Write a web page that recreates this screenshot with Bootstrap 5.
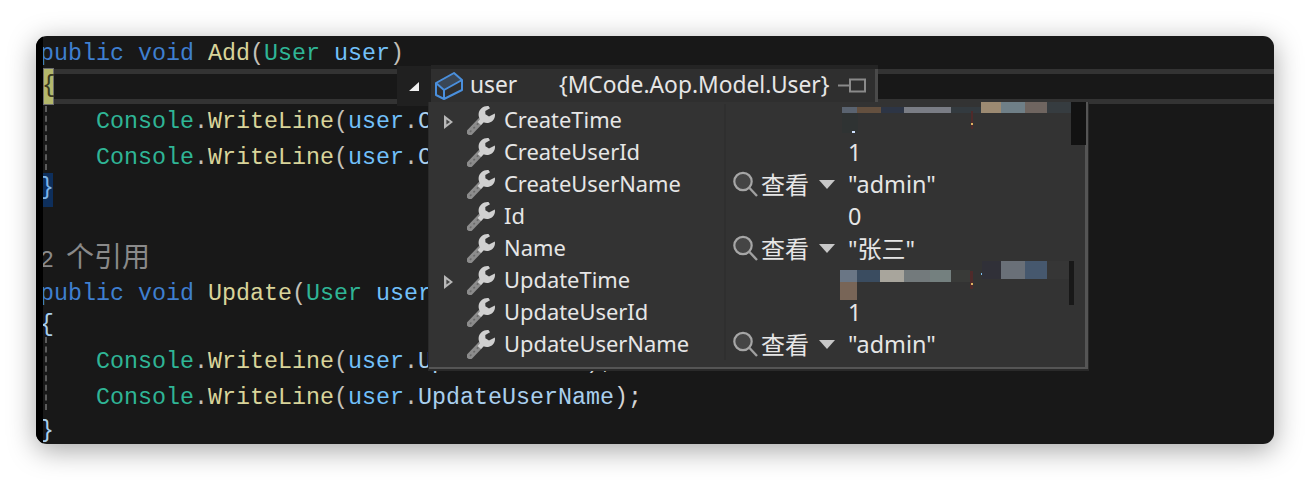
<!DOCTYPE html>
<html lang="zh"><head><meta charset="utf-8"><title>Debug tooltip</title>
<link href="https://cdn.jsdelivr.net/npm/bootstrap@5.3.0/dist/css/bootstrap.min.css" rel="stylesheet">
<style>
html,body{height:100%;background:#fff;overflow:hidden}
.stage{padding:36px 36px 0}
.win{height:408px;border-radius:11px;background:#181818;box-shadow:0 6px 28px rgba(0,0,0,.36);overflow:hidden}
.strip{width:7px;background:#000;flex:none}
.code{overflow:hidden;font:23.33px/1 "Liberation Mono",monospace;color:#d4d4d4}
.cl{margin-left:-3px;display:flex;align-items:flex-end}
.t{display:block;white-space:pre}
.h28{height:28px}.h31{height:31px}.h33{height:33px}.h36{height:36px}.h37{height:37px}
.first{padding-bottom:3px}
.kw{color:#3f7fd0}.ty{color:#2fb596}.me{color:#d8d49a}.pa{color:#72c0fa}.pu{color:#c4c0b8}.bl{color:#a9cfee}
.lens{color:#8a8a8a}.lens b{font:400 28px/1 "Noto Sans CJK SC",sans-serif;margin-left:-2px}
.band{height:35px;border-top:5px solid #333;border-bottom:5px solid #333}
.yb{width:11px;height:37px;margin:-6px 0;background:#b4b86c;border:1px solid #6e6e6e;color:#3a3a20;line-height:34px;text-align:center;text-indent:-2px;position:relative}
.gd{margin-left:2px;border-left:2px dashed #5c5c5c}
.gd .cl{margin-left:-7px}
.gdA{margin-top:2px;margin-bottom:3px}
.hb{width:10px;height:34px;background:#0e2f5c;color:#7cb4ea;line-height:30px;overflow:hidden}
.hb span{margin-left:-3px}
.tip{left:361px;top:29px;font-family:"Noto Sans","Noto Sans CJK SC",sans-serif;font-size:21.9px;color:#e6e6e6}
.pinbox{width:34px;height:40px;margin-top:1px;margin-bottom:-4px;background:#202020;position:relative}
.head{height:33px;margin-top:4px;width:447px;background:#2f2f2f;border-right:3px solid #4a4a4a;box-shadow:0 -4px 0 #242424;font-size:22.8px}
.uname{width:89px;margin-left:7px}
.uval{width:279px}
.panel{position:relative;margin-left:32px;width:659px;height:267px;background:#333;border-right:3px solid #555;border-bottom:2px solid #555;padding-top:2px;box-shadow:0 1px 0 1px #2a2a2a}
.rw{height:32px}
.exp{width:38px;flex:none;padding-left:14px}
.ico{width:28px;height:30px;flex:none}
.nm{width:229px;flex:none;padding-left:9px;white-space:nowrap;line-height:32px}
.cell{width:2px;flex:none;background:#2f2f2f;align-self:stretch}
.act{width:122px;flex:none;padding-left:6px}
.zh{font:400 24px/32px "Noto Sans CJK SC",sans-serif;width:48px;margin-left:3px}
.val{white-space:nowrap;line-height:32px;font-size:23.4px}
.val i{font:400 24px/32px "Noto Sans CJK SC",sans-serif}
.smear{left:0;top:0;width:659px;height:267px;pointer-events:none}
.dd{margin-left:10px}
</style></head>
<body>
<svg width="0" height="0" class="position-absolute">
<defs>
<symbol id="wr" viewBox="0 0 28 30">
<path d="M3 27 L14 15.5" stroke="#8c8c8c" stroke-width="6.5" stroke-linecap="round" fill="none"/>
<path d="M3 27 L14 15.5" stroke="#6a6a6a" stroke-width="1.6" stroke-dasharray="2 3" fill="none"/>
<path d="M21.5 1 C16.5 .5 12 4 11.6 9 C11.5 11 12 12.8 13 14.2 L10.6 17 L14 20 L16.5 17.2 C18 18 20 18.3 22 17.8 C25.5 17 28 13.8 28 10.3 L27.9 8.5 L22 11.6 L18.4 9.3 L18.3 6 L23 3.2 Z" fill="#d0d0d0"/>
</symbol>
<symbol id="mg" viewBox="0 0 26 26">
<circle cx="11" cy="10.5" r="8.7" fill="#454545" stroke="#a6a6a6" stroke-width="2.2"/>
<path d="M17.5 17 L25 25" stroke="#a0a0a0" stroke-width="2.4"/>
</symbol>
<symbol id="ar" viewBox="0 0 16 9">
<path d="M0 0 H16 L8 9Z" fill="#c8c8c8"/>
</symbol>
<symbol id="ex" viewBox="0 0 10 14">
<path d="M1 0 L10 7 L1 14Z" fill="#b8b8b8"/><path d="M3.4 4.5 L7 7 L3.4 9.5Z" fill="#444"/>
</symbol>
</defs>
</svg>
<div class="stage">
<div class="win d-flex position-relative">
 <div class="strip"></div>
 <div class="code flex-fill">
  <div class="cl h33 first"><span class="t"><span class="kw">public void</span> <span class="me">Add</span><span class="pu">(</span><span class="ty">User</span> <span class="pa">user</span><span class="pu">)</span></span></div>
  <div class="band d-flex"><span class="yb">{</span></div>
  <div class="gd gdA">
   <div class="cl h28"><span class="t">    <span class="ty">Console</span><span class="pu">.</span><span class="me">WriteLine</span><span class="pu">(</span><span class="pa">user</span><span class="pu">.</span><span class="bl">CreateUserId</span>);</span></div>
   <div class="cl h36"><span class="t">    <span class="ty">Console</span><span class="pu">.</span><span class="me">WriteLine</span><span class="pu">(</span><span class="pa">user</span><span class="pu">.</span><span class="bl">CreateUserName</span>);</span></div>
  </div>
  <div class="hb d-flex"><span>}</span></div>
  <div class="h33"></div>
  <div class="cl h33 lens"><span class="t">2 <b>个引用</b></span></div>
  <div class="cl h33"><span class="t"><span class="kw">public void</span> <span class="me">Update</span><span class="pu">(</span><span class="ty">User</span> <span class="pa">user</span><span class="pu">)</span></span></div>
  <div class="cl h31 bl"><span class="t">{</span></div>
  <div class="gd">
   <div class="cl h37"><span class="t">    <span class="ty">Console</span><span class="pu">.</span><span class="me">WriteLine</span><span class="pu">(</span><span class="pa">user</span><span class="pu">.</span><span class="bl">UpdateUserId</span>);</span></div>
   <div class="cl h36"><span class="t">    <span class="ty">Console</span><span class="pu">.</span><span class="me">WriteLine</span><span class="pu">(</span><span class="pa">user</span><span class="pu">.</span><span class="bl">UpdateUserName</span>);</span></div>
  </div>
  <div class="cl h33 bl"><span class="t">}</span></div>
 </div>

 <div class="tip position-absolute">
  <div class="d-flex">
   <div class="pinbox d-flex align-items-center justify-content-center">
    <svg width="10" height="9" viewBox="0 0 10 9"><path d="M0 9 L10 0 V9Z" fill="#f0f0f0"/></svg>
   </div>
   <div class="head d-flex align-items-center">
    <svg width="28" height="28" viewBox="0 0 28 28" class="flex-none ms-1" fill="none"><path d="M1 11 L19 1 L27 8 L9 18Z" fill="#3a4756"/><path d="M1 11 L19 1 L27 8 V18 L9 27 L1 23Z M1 11 L9 18 V27 M9 18 L27 8" stroke="#4a8fdc" stroke-width="2" stroke-linejoin="round"/></svg>
    <span class="uname">user</span>
    <span class="uval">{MCode.Aop.Model.User}</span>
    <svg width="28" height="15" viewBox="0 0 28 15" fill="none" stroke="#8a8a8a" stroke-width="2"><path d="M0 7.5 H12 M12 0.5 V14.5 M12 1.5 H27 V13.5 H12"/></svg>
   </div>
  </div>
  <div class="panel">
   <div class="rw d-flex align-items-center"><div class="exp"><svg width="10" height="14"><use href="#ex"/></svg></div><svg class="ico"><use href="#wr"/></svg><div class="nm">CreateTime</div><div class="cell"></div><div class="act"></div><div class="val"></div></div>
   <div class="rw d-flex align-items-center"><div class="exp"></div><svg class="ico"><use href="#wr"/></svg><div class="nm">CreateUserId</div><div class="cell"></div><div class="act"></div><div class="val">1</div></div>
   <div class="rw d-flex align-items-center"><div class="exp"></div><svg class="ico"><use href="#wr"/></svg><div class="nm">CreateUserName</div><div class="cell"></div><div class="act d-flex align-items-center"><svg width="26" height="26"><use href="#mg"/></svg><span class="zh">查看</span><svg class="dd" width="16" height="9"><use href="#ar"/></svg></div><div class="val">"admin"</div></div>
   <div class="rw d-flex align-items-center"><div class="exp"></div><svg class="ico"><use href="#wr"/></svg><div class="nm">Id</div><div class="cell"></div><div class="act"></div><div class="val">0</div></div>
   <div class="rw d-flex align-items-center"><div class="exp"></div><svg class="ico"><use href="#wr"/></svg><div class="nm">Name</div><div class="cell"></div><div class="act d-flex align-items-center"><svg width="26" height="26"><use href="#mg"/></svg><span class="zh">查看</span><svg class="dd" width="16" height="9"><use href="#ar"/></svg></div><div class="val">"<i>张三</i>"</div></div>
   <div class="rw d-flex align-items-center"><div class="exp"><svg width="10" height="14"><use href="#ex"/></svg></div><svg class="ico"><use href="#wr"/></svg><div class="nm">UpdateTime</div><div class="cell"></div><div class="act"></div><div class="val"></div></div>
   <div class="rw d-flex align-items-center"><div class="exp"></div><svg class="ico"><use href="#wr"/></svg><div class="nm">UpdateUserId</div><div class="cell"></div><div class="act"></div><div class="val">1</div></div>
   <div class="rw d-flex align-items-center"><div class="exp"></div><svg class="ico"><use href="#wr"/></svg><div class="nm">UpdateUserName</div><div class="cell"></div><div class="act d-flex align-items-center"><svg width="26" height="26"><use href="#mg"/></svg><span class="zh">查看</span><svg class="dd" width="16" height="9"><use href="#ar"/></svg></div><div class="val">"admin"</div></div>
   <svg class="smear position-absolute" viewBox="0 0 659 267">
    <g transform="translate(-429,-102)">
     <rect x="842" y="113" width="16" height="20" fill="#2f3333"/>
     <rect x="842" y="107" width="16" height="6" fill="#5a6370"/><rect x="857" y="107" width="24" height="6" fill="#64503f"/><rect x="881" y="107" width="23" height="6" fill="#2d3545"/><rect x="904" y="107" width="47" height="6" fill="#7a7d85"/><rect x="951" y="107" width="30" height="6" fill="#333a3f"/>
     <rect x="981" y="102" width="20" height="11" fill="#9c8a72"/><rect x="1001" y="102" width="24" height="11" fill="#6f7f87"/><rect x="1025" y="102" width="22" height="11" fill="#6f6560"/><rect x="1047" y="102" width="24" height="11" fill="#363c40"/>
     <rect x="971" y="111" width="2" height="18" fill="#4f2a2a"/><rect x="971" y="123" width="2" height="2" fill="#e0b060"/><rect x="852" y="131" width="3" height="2" fill="#cfe0ff"/>
     <rect x="1071" y="102" width="15" height="43" fill="#121212"/>
     <rect x="840" y="270" width="17" height="12" fill="#6a7685"/><rect x="857" y="270" width="23" height="12" fill="#3a4c60"/><rect x="880" y="270" width="24" height="12" fill="#a8a59c"/><rect x="904" y="270" width="26" height="12" fill="#737a7c"/><rect x="930" y="270" width="21" height="12" fill="#74807f"/><rect x="951" y="270" width="19" height="12" fill="#393a38"/>
     <rect x="840" y="282" width="17" height="18" fill="#786557"/>
     <rect x="970" y="271" width="3" height="18" fill="#4f2a2a"/><rect x="971" y="283" width="2" height="2" fill="#e0b060"/><rect x="981" y="273" width="2" height="2" fill="#7cc0f0"/>
     <rect x="982" y="261" width="19" height="18" fill="#303038"/><rect x="1001" y="261" width="24" height="18" fill="#6a7078"/><rect x="1025" y="261" width="22" height="18" fill="#46586e"/><rect x="1047" y="261" width="22" height="18" fill="#363636"/><rect x="1069" y="261" width="5" height="44" fill="#181818"/>
    </g>
   </svg>
  </div>
 </div>
</div>
</div>
<script src="https://cdn.jsdelivr.net/npm/bootstrap@5.3.0/dist/js/bootstrap.bundle.min.js"></script>
</body></html>
